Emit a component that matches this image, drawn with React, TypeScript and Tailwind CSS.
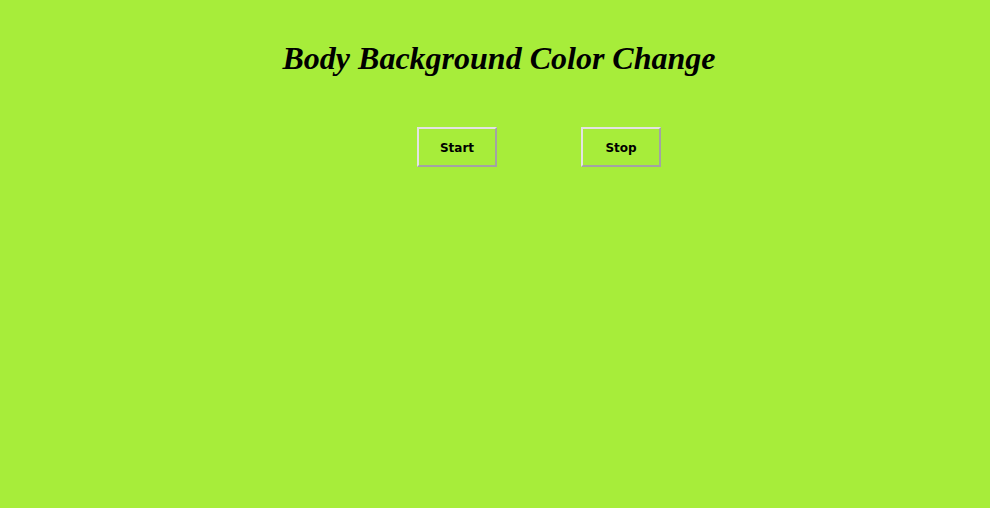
const ColorButton = ({ label }: { label: string }) => {
  return (
    <button
      className="w-[80px] h-[40px] border-2 border-t-[#e3e3e3] border-l-[#e3e3e3] border-r-[#a3a3a3] border-b-[#a3a3a3] bg-transparent pt-[1px] text-[12px] font-bold text-black"
      style={{ fontFamily: '"DejaVu Sans", Verdana, sans-serif' }}
    >
      {label}
    </button>
  );
};

export default function App() {
  return (
    <div className="min-h-[508px] w-full bg-[#a7ed3a]">
      <h1 className="pl-[8px] pt-[40px] text-center text-[32px] font-bold italic leading-[37px] text-black [font-family:'Liberation_Serif',serif]">
        Body Background Color Change
      </h1>
      <div className="mt-[50px] flex justify-center gap-[84px] pl-[88px]">
        <ColorButton label="Start" />
        <ColorButton label="Stop" />
      </div>
    </div>
  );
}
